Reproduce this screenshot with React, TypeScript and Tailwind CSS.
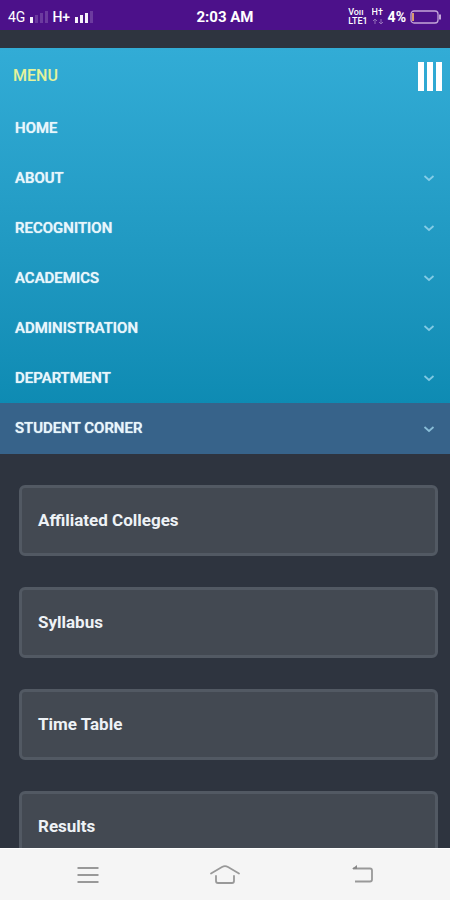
const menuItems = [
  { label: "HOME", expandable: false },
  { label: "ABOUT", expandable: true },
  { label: "RECOGNITION", expandable: true },
  { label: "ACADEMICS", expandable: true },
  { label: "ADMINISTRATION", expandable: true },
  { label: "DEPARTMENT", expandable: true },
];

const studentLinks = ["Affiliated Colleges", "Syllabus", "Time Table", "Results"];

function Chevron() {
  return (
    <svg className="h-2 w-3" viewBox="0 0 12 8" fill="none" aria-hidden="true">
      <path d="M1.500 2L6 6l4.500-4" stroke="#a5dcf2" strokeOpacity="0.75" strokeWidth="1.7" />
    </svg>
  );
}

function Signal({ level }: { level: number }) {
  return (
    <svg className="h-3 w-[19px]" viewBox="0 0 19 12" aria-hidden="true">
      {[0, 1, 2, 3].map((i) => (
        <rect
          key={i}
          x={1 + i * 5}
          y={6 - i * 2}
          width="3"
          height={6 + i * 2}
          fill="#fff"
          fillOpacity={i < level ? 0.95 : 0.18}
        />
      ))}
    </svg>
  );
}

function StatusBar() {
  return (
    <header className="grid h-[30px] shrink-0 grid-cols-3 items-center bg-[#4c118a] px-2 pt-1 text-white">
      <div className="flex items-center text-sm">
        <span className="mr-1">4G</span>
        <Signal level={1} />
        <span className="mr-1 ml-1 font-medium">H+</span>
        <Signal level={3} />
      </div>
      <time className="text-center text-[15px] font-bold">2:03 AM</time>
      <div className="flex items-center justify-end">
        <span className="mr-1 flex flex-col text-[9px] leading-[9px] font-medium">
          <span className="h-[9px] overflow-hidden">Voıı</span>
          <span className="h-[9px] overflow-hidden">LTE1</span>
        </span>
        <span className="mr-1 flex flex-col text-[9px] leading-[9px] font-medium">
          <span className="h-[9px] overflow-hidden">H†</span>
          <svg className="h-[9px] w-3 opacity-40" viewBox="0 0 12 9" fill="none" stroke="#fff" aria-hidden="true">
            <path d="M3 7V2M1 4l2-2 2 2M9 2v5M7 5l2 2 2-2" />
          </svg>
        </span>
        <span className="mr-1 text-sm font-bold">4%</span>
        <svg className="h-[14px] w-8" viewBox="0 0 32 14" fill="none" aria-hidden="true">
          <rect x="1" y="1" width="27" height="12" rx="3" stroke="#c3a5d8" strokeWidth="1.3" />
          <rect x="2" y="3" width="2" height="8" fill="#d99a6c" />
          <path d="M30 4.500v5" stroke="#c3a5d8" strokeWidth="2" />
        </svg>
      </div>
    </header>
  );
}

function NavBar() {
  return (
    <footer className="flex h-[52px] shrink-0 items-center justify-around border-t border-white bg-[#f5f5f5] px-5">
      <button type="button" aria-label="Recent apps">
        <svg className="h-6 w-8" viewBox="0 0 32 24" fill="none" stroke="#999" strokeWidth="1.8" aria-hidden="true">
          <path d="M5.500 5h21M5.500 12h21M5.500 19h21" />
        </svg>
      </button>
      <button type="button" aria-label="Home">
        <svg className="h-6 w-8" viewBox="0 0 32 24" fill="none" stroke="#999" strokeWidth="1.800" strokeLinecap="round" aria-hidden="true">
          <path d="M2 10.500L13 4q3-1.800 6 0l11 6.500" />
          <path d="M7 13v5q0 2 2 2h14q2 0 2-2v-5" />
        </svg>
      </button>
      <button type="button" aria-label="Back">
        <svg className="h-6 w-8" viewBox="0 0 32 24" fill="none" stroke="#999" strokeWidth="1.800" aria-hidden="true">
          <path d="M7 5.500h17q2 0 2 2v9q0 2-2 2H9" />
          <path d="M6 6l5-4v4z" fill="#888" stroke="none" />
        </svg>
      </button>
    </footer>
  );
}

export default function App() {
  return (
    <div className="flex h-screen flex-col overflow-hidden bg-[#2e343f] font-['Roboto','Liberation_Sans',sans-serif]">
      <StatusBar />
      <main className="min-h-0 flex-1 overflow-hidden pt-[18px]">
        <nav aria-label="Main">
          <div className="bg-linear-to-b from-[#32acd6] to-[#0e8bb3]">
            <div className="flex h-[55px] items-center justify-between pr-2 pl-[13px]">
              <h1 className="text-base font-medium text-[#e5f39b]">MENU</h1>
              <button type="button" aria-label="Toggle menu" className="flex gap-[3px] pt-[2px]">
                <span className="h-[29px] w-[6px] bg-white" />
                <span className="h-[29px] w-[6px] bg-white" />
                <span className="h-[29px] w-[6px] bg-white" />
              </button>
            </div>
            {menuItems.map((item) => (
              <button
                key={item.label}
                type="button"
                className="flex h-[50px] w-full items-center justify-between pr-[15px] pl-[15px] text-[15px] font-medium text-[#e8f6fb] [text-shadow:0_0_1px_#e8f6fb]"
              >
                {item.label}
                {item.expandable && <Chevron />}
              </button>
            ))}
          </div>
          <button
            type="button"
            aria-expanded="true"
            className="flex h-[51px] w-full items-center justify-between bg-[#37638a] pr-[15px] pl-[15px] text-[15px] font-medium text-[#e8f6fb] [text-shadow:0_0_1px_#e8f6fb]"
          >
            STUDENT CORNER
            <Chevron />
          </button>
          <ul className="flex flex-col gap-[31px] pt-[31px] pr-3 pl-[19px]">
            {studentLinks.map((label) => (
              <li key={label}>
                <a
                  href="#"
                  className="flex h-[71px] items-center rounded-md border-[3px] border-[#525963] bg-[#434952] px-4 text-[17px] font-bold text-[#eef2f6]"
                >
                  {label}
                </a>
              </li>
            ))}
          </ul>
        </nav>
      </main>
      <NavBar />
    </div>
  );
}
